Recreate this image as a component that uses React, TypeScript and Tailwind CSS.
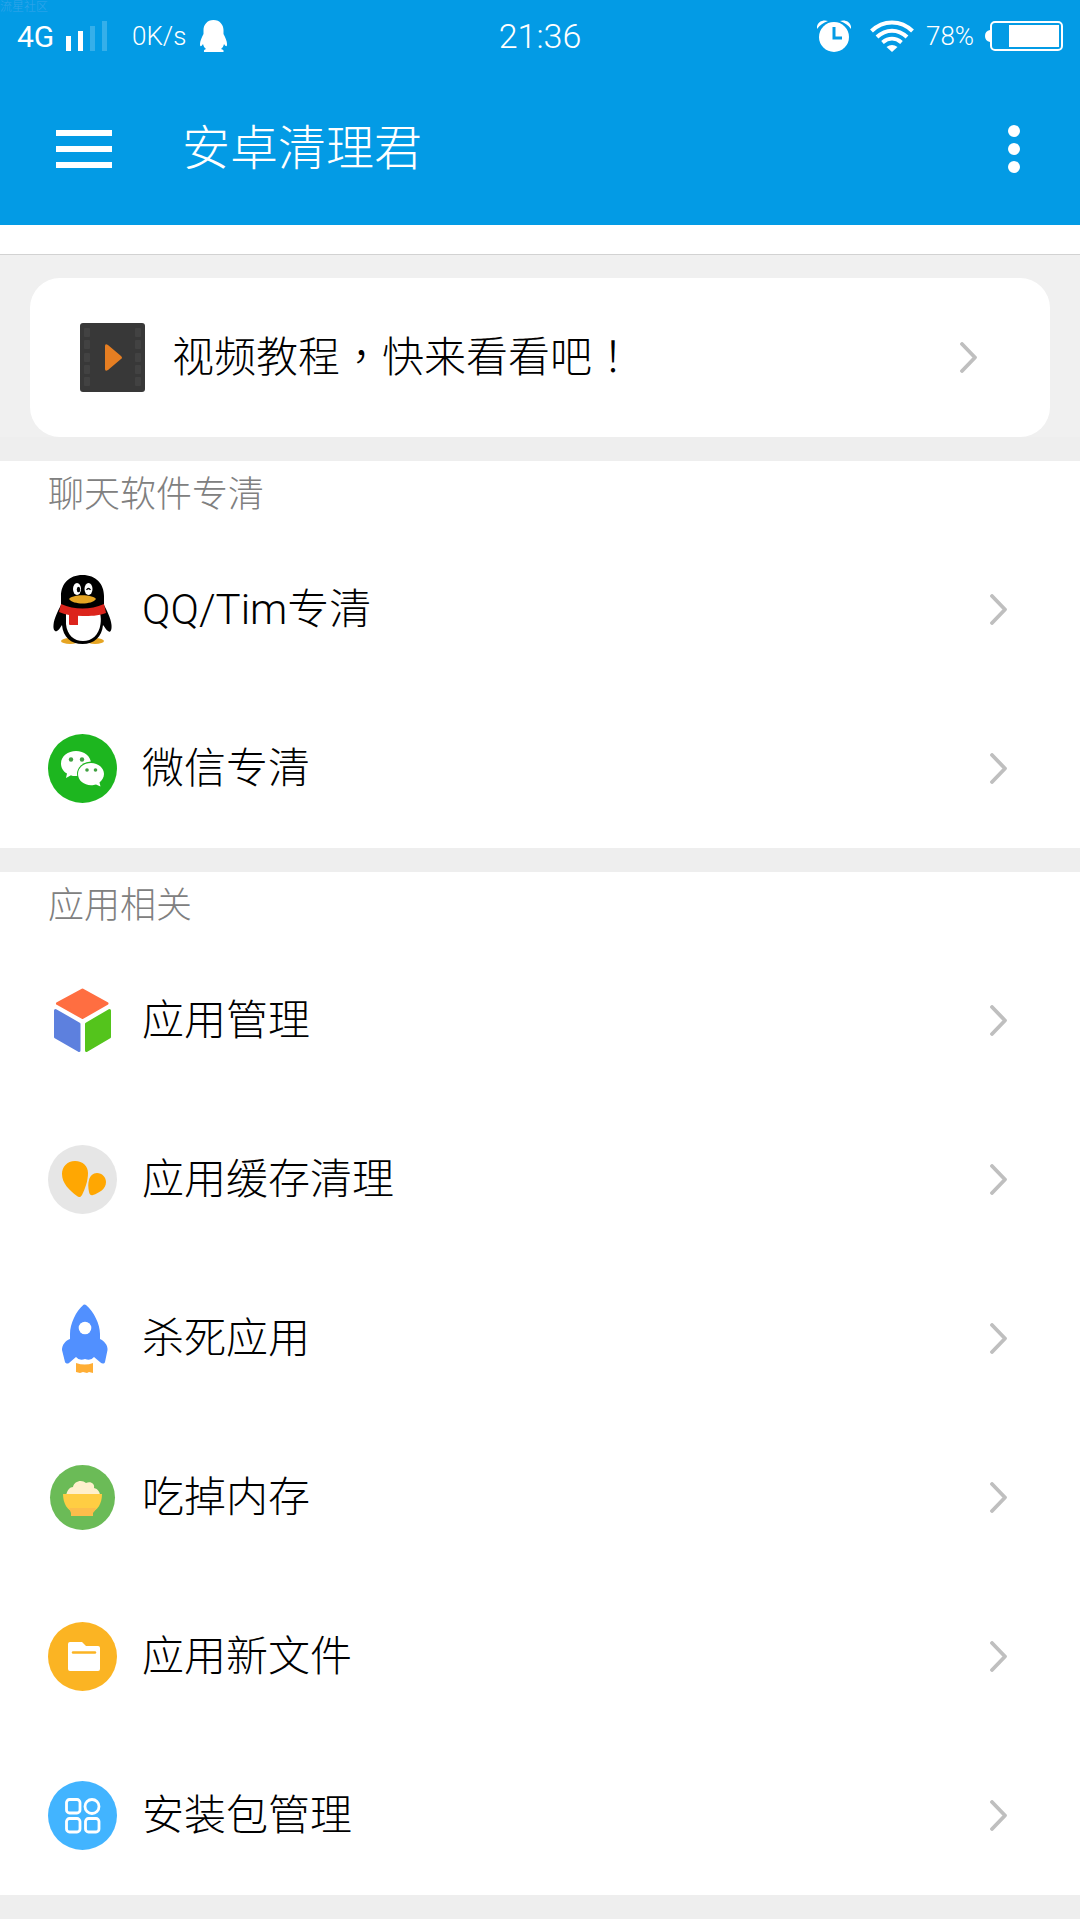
import type { ReactNode } from "react";

type Item = { label: string; icon: ReactNode };

const iconCls = "size-[69px] shrink-0";

function FilmIcon() {
  return (
    <svg viewBox="0 0 69 69" className={iconCls} aria-hidden="true">
      <rect x="2" width="65" height="69" rx="3" fill="#383838" />
      {[5, 17, 30, 42, 54].map(y => (
        <g key={y} fill="#424242">
          <rect x="6" y={y} width="6" height="9" rx="1" />
          <rect x="57" y={y} width="6" height="9" rx="1" />
        </g>
      ))}
      <path d="M27 23q0-3 3-1l13 11q2 2 0 3L30 47q-3 2-3-1z" fill="#e67e22" />
    </svg>
  );
}

function QQIcon() {
  return (
    <svg viewBox="0 0 69 69" className={iconCls} aria-hidden="true">
      <ellipse cx="22" cy="66" rx="9" ry="3" fill="#e6a523" />
      <ellipse cx="47" cy="66" rx="9" ry="3" fill="#e6a523" />
      <path d="M34.5 0C48 0 56 9 56 21v9c2 4 7 13 7.5 20 .5 6-1.500 8-3.500 6-2-1-3-4-5-6C54 62 46 69 34.500 69S15 62 14 50c-2 3-3 5-5 6-2 1-4-1-3.500-6C6 43 11 34 13 30v-9C13 9 21 0 34.500 0z" fill="#000" />
      <path d="M18 38h34c1 4 1 8 .5 11C51 60 44 66 35 66S19 60 18 49z" fill="#fff" />
      <path d="M13 29c14 6 29 6 43 0l2 9c-8 3-16 3-23 3-9 0-17-1-24-4z" fill="#dc241c" />
      <path d="M21 38l9 1v11h-8q-1 0-1-1z" fill="#dc241c" />
      <ellipse cx="29" cy="14" rx="4" ry="6" fill="#fff" />
      <ellipse cx="40.5" cy="14" rx="4" ry="6" fill="#fff" />
      <ellipse cx="30.5" cy="14.5" rx="1.7" ry="2.7" fill="#000" />
      <path d="M38.5 15q2-3 4 0" fill="none" stroke="#000" strokeWidth="1.3" />
      <path d="M21 24c4-5 23-5 27 0-4 6-23 6-27 0z" fill="#e6a523" />
    </svg>
  );
}

function WechatIcon() {
  return (
    <svg viewBox="0 0 69 69" className={iconCls} aria-hidden="true">
      <circle cx="34.5" cy="34.5" r="34.5" fill="#1db61f" />
      <path d="M28 17c8 0 15 5 15 12.500S36 42 28 42c-2 0-4 0-5-.8L18 44l1-4.500c-4-2-6-6-6-10C13 22 20 17 28 17z" fill="#fff" />
      <ellipse cx="43" cy="40" rx="14" ry="12.5" fill="#1db61f" />
      <path d="M43 29c7.500 0 13 5 13 11 0 3.500-2 6.500-4.500 8.500l1 4-4.500-2c-1.500.5-3 .7-5 .7-7 0-13-4.700-13-11.200S36 29 43 29z" fill="#fff" />
      <g fill="#3fa040">
        <circle cx="23" cy="25.5" r="2.2" />
        <circle cx="34" cy="25.5" r="2.2" />
        <circle cx="39" cy="36" r="1.8" />
        <circle cx="47.5" cy="36" r="1.8" />
      </g>
    </svg>
  );
}

function CubeIcon() {
  return (
    <svg viewBox="0 0 69 69" className={iconCls} aria-hidden="true">
      <g strokeWidth="3" strokeLinejoin="round">
        <path d="M34.500 4L59 17.500 34.500 31.500 9.500 17.500z" fill="#ff6e41" stroke="#ff6e41" />
        <path d="M7.500 24.500L31 38v26.500L7.500 51z" fill="#5d80de" stroke="#5d80de" />
        <path d="M61.500 24.500L38.500 38v26.500L61.500 51z" fill="#54c41c" stroke="#54c41c" />
      </g>
    </svg>
  );
}

function CacheIcon() {
  return (
    <svg viewBox="0 0 69 69" className={iconCls} aria-hidden="true">
      <circle cx="34.5" cy="34.5" r="34.5" fill="#e6e6e6" />
      <path d="M27 16c8 0 13 5 13 12 0 8-3 16-6 22-1 2-3 3-5 1-8-6-15-13-15-22 0-7 5-13 13-13z" fill="#ffa702" />
      <path d="M49 28c5 0 9 4 9 9 0 7-7 11-13 13q-3 1-4-3c-1-5-1-9 0-12 1-4 4-7 8-7z" fill="#ffa702" />
    </svg>
  );
}

function RocketIcon() {
  return (
    <svg viewBox="0 0 69 69" className={iconCls} aria-hidden="true">
      <path d="M35.500.8Q37 0 38 1c8 7 14 19 14 29v5c4 2 8 6 7.500 11L57 58c-.5 2-3 2-4.500.5L46 53q-3 4-9 2-6 2-9-2l-7 6c-1.500 1-3.500.5-4-1l-3-12c0-5 3-9 8-11v-5c0-10 6-23 13.500-29.200z" fill="#5190ff" />
      <circle cx="37" cy="24" r="6.3" fill="#fff" />
      <path d="M28 59q9 3 17 0v10l-4-1-2 1-4-1-3 1-4-1z" fill="#ffae35" />
    </svg>
  );
}

function RiceIcon() {
  return (
    <svg viewBox="0 0 69 69" className={iconCls} aria-hidden="true">
      <circle cx="34.5" cy="34.5" r="32.5" fill="#6bbb57" />
      <path d="M18 33c1-6 4-9 7-9 1-6 9-8 13-4 5-2 9 1 8 5 4 1 6 4 6 8z" fill="#fff0cd" />
      <path d="M15 31h39c0 10-5 17-11 18H26C20 48 15 41 15 31z" fill="#ffcd43" />
      <path d="M21 45h27q-1 3-3 5v3H23v-3z" fill="#fdbd4b" />
    </svg>
  );
}

function FolderIcon() {
  return (
    <svg viewBox="0 0 69 69" className={iconCls} aria-hidden="true">
      <circle cx="34.5" cy="34.5" r="34.5" fill="#fbb423" />
      <path d="M22 20h12l4 4h12q2 0 2 2v21q0 2-2 2H22q-2 0-2-2V22q0-2 2-2z" fill="#fff" />
      <path d="M25 30.500h22" stroke="#fbb423" strokeWidth="2.4" strokeLinecap="round" />
    </svg>
  );
}

function PackageIcon() {
  return (
    <svg viewBox="0 0 69 69" className={iconCls} aria-hidden="true">
      <circle cx="34.5" cy="34.5" r="34.5" fill="#42b4ff" />
      <g fill="none" stroke="#fff" strokeWidth="2.8">
        <rect x="18.5" y="18.5" width="13.5" height="13.5" rx="3" />
        <circle cx="44" cy="25.5" r="7" />
        <rect x="18.5" y="37.5" width="13.5" height="13.5" rx="3" />
        <rect x="37.5" y="37.5" width="13.5" height="13.5" rx="3" />
      </g>
    </svg>
  );
}

function Chevron() {
  return (
    <svg viewBox="0 0 17 31" className="w-[17px] h-[31px] shrink-0" aria-hidden="true">
      <path d="M2 2l13 13.500L2 29" fill="none" stroke="#bfbfbf" strokeWidth="3.8" strokeLinecap="round" strokeLinejoin="round" />
    </svg>
  );
}

function Row({ label, icon }: Item) {
  return (
    <button className="flex w-full h-[159px] items-center pl-12 pr-[73px] text-left">
      {icon}
      <span className="ml-[25px] flex-1 text-[42px] leading-[60px] text-black">{label}</span>
      <Chevron />
    </button>
  );
}

function Section({ title, items }: { title: string; items: Item[] }) {
  return (
    <section className="bg-white border-b-24 border-[#eeeeee]">
      <h2 className="h-[69px] pl-12 pt-2.5 text-[36px] leading-[48px] text-[#808080]">{title}</h2>
      <ul>
        {items.map(item => (
          <li key={item.label}><Row {...item} /></li>
        ))}
      </ul>
    </section>
  );
}

function StatusBar() {
  return (
    <div className="relative grid grid-cols-[1fr_auto_1fr] h-[72px] items-center px-[17px] text-[26px]">
      <span className="absolute left-0 top-0 text-[12px] leading-[14px] text-[#35a5ea]">流星社区</span>
      <div className="flex items-center">
        <span className="w-[49px] text-[30px] font-normal">4G</span>
        <svg viewBox="0 0 42 32" className="w-[42px] h-8" fill="#fff" aria-hidden="true">
          <rect y="16" width="5" height="15" />
          <rect x="12" y="11" width="5" height="20" />
          <rect x="24" y="6" width="5" height="25" opacity=".2" />
          <rect x="36" y="1" width="5" height="30" opacity=".2" />
        </svg>
        <span className="ml-6 w-[68px]">0K/s</span>
        <svg viewBox="0 0 27 32" className="w-[27px] h-8" fill="#fff" aria-hidden="true">
          <path d="M13.500 0C20 0 23.500 5 23.500 10v4c2 4 3.500 7 3.500 10 0 3-1 3-3 0-.5 2-1.500 4-3 5 2 .5 3 1 2.500 3H4c-.5-2 .5-2.500 2-3-1.500-1-2.500-3-3-5-2 3-3 3-3 0 0-3 1.500-6 3.500-10v-4C3.500 5 7 0 13.500 0z" />
        </svg>
      </div>
      <time className="text-[34px]">21:36</time>
      <div className="flex items-center justify-end">
        <svg viewBox="0 0 34 32" className="w-[34px] h-8" aria-hidden="true">
          <path d="M0 9C-1 2 6-1 11 1 6 3 3 5 0 9zM34 9c1-7-6-10-11-8 5 2 8 4 11 8z" fill="#fff" />
          <circle cx="17" cy="17" r="15" fill="#fff" />
          <path d="M17 7v11h8" fill="none" stroke="#039be5" strokeWidth="3" />
        </svg>
        <svg viewBox="0 0 44 32" className="ml-[19px] w-11 h-8" fill="none" stroke="#fff" strokeWidth="4" aria-hidden="true">
          <path d="M1.500 11C13-.5 31-.5 42.500 11M7 17c9-8.500 21-8.500 30 0M12.500 22.500c6-5 13-5 19 0" />
          <path d="M16.500 27q5.500-4 11 0L22 32z" fill="#fff" stroke="none" />
        </svg>
        <span className="ml-3 w-[59px]">78%</span>
        <svg viewBox="0 0 78 32" className="w-[78px] h-8" aria-hidden="true">
          <path d="M5 10v12q-5-1-5-6t5-6z" fill="#fff" />
          <rect x="6" y="2" width="71" height="28" rx="4" fill="none" stroke="#fff" strokeWidth="2" />
          <rect x="24" y="5" width="50" height="22" fill="#fff" />
        </svg>
      </div>
    </div>
  );
}

const chatItems: Item[] = [
  { label: "QQ/Tim专清", icon: <QQIcon /> },
  { label: "微信专清", icon: <WechatIcon /> },
];

const appItems: Item[] = [
  { label: "应用管理", icon: <CubeIcon /> },
  { label: "应用缓存清理", icon: <CacheIcon /> },
  { label: "杀死应用", icon: <RocketIcon /> },
  { label: "吃掉内存", icon: <RiceIcon /> },
  { label: "应用新文件", icon: <FolderIcon /> },
  { label: "安装包管理", icon: <PackageIcon /> },
];

export default function App() {
  return (
    <div className="min-h-screen bg-white font-light font-['Roboto','Noto_Sans_CJK_SC',sans-serif]">
      <header className="bg-[#039be5] text-white">
        <StatusBar />
        <div className="flex h-[153px] items-center pl-14 pr-[60px]">
          <button aria-label="菜单" className="flex flex-col gap-2.5 w-14">
            <span className="h-1.5 w-full bg-white" />
            <span className="h-1.5 w-full bg-white" />
            <span className="h-1.5 w-full bg-white" />
          </button>
          <h1 className="ml-[70px] flex-1 text-5xl leading-[60px]">安卓清理君</h1>
          <button aria-label="更多" className="flex flex-col gap-1.5">
            <span className="size-3 rounded-full bg-white" />
            <span className="size-3 rounded-full bg-white" />
            <span className="size-3 rounded-full bg-white" />
          </button>
        </div>
      </header>

      <main>
        <div className="h-[30px] border-b border-[#d2d2d2]" />
        <div className="bg-[#f0f0f0] px-[30px] pt-[23px]">
          {/* TC 字体的全角标点居中 */}
          <div className="rounded-[30px] bg-white font-['Roboto','Noto_Sans_CJK_TC',sans-serif]">
            <Row label="视频教程，快来看看吧！" icon={<FilmIcon />} />
          </div>
        </div>
        <div className="h-6 bg-[#eeeeee]" />
        <Section title="聊天软件专清" items={chatItems} />
        <Section title="应用相关" items={appItems} />
      </main>
    </div>
  );
}
